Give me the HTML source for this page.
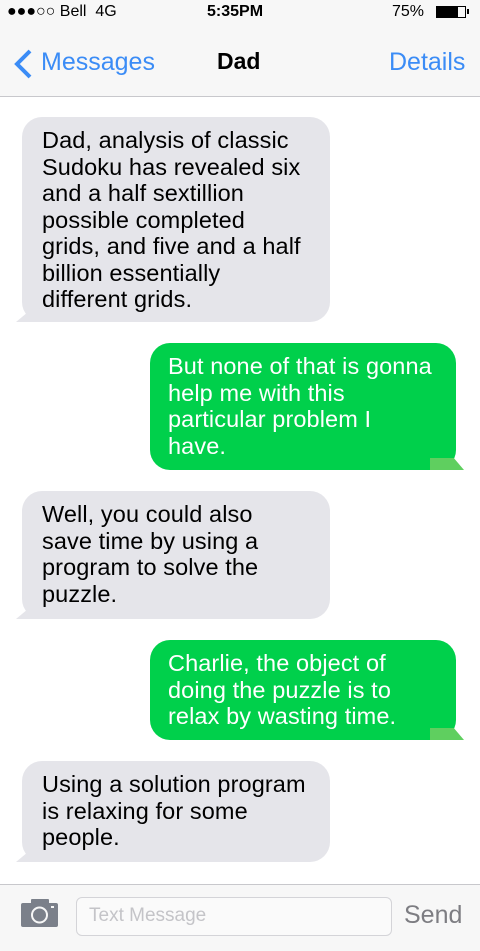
<!DOCTYPE html>
<html><head><style>
body{margin:0;width:480px;height:950px;background:#fff;font-family:"Liberation Sans",Arial,sans-serif;position:relative;overflow:hidden}
.top{position:absolute;left:0;top:0;width:480px;height:96px;background:#f7f7f7;border-bottom:1px solid #c8c8cc}
.abs{position:absolute}
.b{position:absolute;border-radius:20px;font-size:23.5px;line-height:26.5px;padding:10px 10px 9px 20px;box-sizing:border-box;white-space:nowrap;letter-spacing:0.1px}
.g{background:#e5e5ea;color:#000;left:22px;width:308px}
.gr{background:#00d04b;color:#fff;left:150px;width:306px;padding-left:18px}
.tl{position:absolute;left:-6px;bottom:0;width:26px;height:14px;background:#e5e5ea;clip-path:polygon(0 100%,45% 30%,100% 0,100% 100%)}
.tr{position:absolute;right:-8px;bottom:0;width:34px;height:12px;background:#5fcf5f;clip-path:polygon(0 0,70% 0,100% 100%,0 100%)}
</style></head><body>
<div class="top">
<div class="abs" style="left:7px;top:3px;font-size:16px">●●●○○ Bell&nbsp; 4G</div>
<div class="abs" style="left:207px;top:3px;font-size:16px;font-weight:bold">5:35PM</div>
<div class="abs" style="left:392px;top:3px;font-size:16px">75%</div>
<div class="abs" style="left:436px;top:6px;width:30px;height:12px;border:1px solid #000;box-sizing:border-box"><div style="width:21px;height:10px;background:#000"></div></div>
<div class="abs" style="left:467px;top:9px;width:2px;height:5px;background:#000"></div>
<svg class="abs" style="left:12px;top:48px" width="22" height="32"><path d="M18 3 L5 16 L18 29" stroke="#3b8cf6" stroke-width="4" fill="none"/></svg>
<div class="abs" style="left:41px;top:48px;font-size:25px;color:#3b8cf6">Messages</div>
<div class="abs" style="left:217px;top:48px;font-size:23px;font-weight:bold">Dad</div>
<div class="abs" style="left:389px;top:48px;font-size:25px;color:#3b8cf6">Details</div>
</div>

<div class="b g" style="top:117px;height:205px">Dad, analysis of classic<br>Sudoku has revealed six<br>and a half sextillion<br>possible completed<br>grids, and five and a half<br>billion essentially<br>different grids.<div class="tl"></div></div>
<div class="b gr" style="top:343px;height:127px">But none of that is gonna<br>help me with this<br>particular problem I<br>have.<div class="tr"></div></div>
<div class="b g" style="top:491px;height:128px">Well, you could also<br>save time by using a<br>program to solve the<br>puzzle.<div class="tl"></div></div>
<div class="b gr" style="top:640px;height:100px">Charlie, the object of<br>doing the puzzle is to<br>relax by wasting time.<div class="tr"></div></div>
<div class="b g" style="top:761px;height:101px">Using a solution program<br>is relaxing for some<br>people.<div class="tl"></div></div>

<div class="abs" style="left:0;top:884px;width:480px;height:66px;background:#f7f7f7;border-top:1px solid #c8c8cc"></div>
<svg class="abs" style="left:20px;top:899px" width="40" height="30"><rect x="1" y="4" width="37" height="24" rx="2" fill="#7b808a"/><circle cx="19.5" cy="16" r="7.5" fill="none" stroke="#f7f7f7" stroke-width="2"/><rect x="11" y="0" width="18" height="6" rx="1" fill="#7b808a"/><rect x="31" y="7" width="3" height="2" fill="#f7f7f7"/></svg>
<div class="abs" style="left:76px;top:897px;width:316px;height:39px;border:1px solid #d4d4d8;border-radius:6px;box-sizing:border-box;background:#fafafa"></div>
<div class="abs" style="left:89px;top:905px;font-size:19px;color:#c4c4c8">Text Message</div>
<div class="abs" style="left:404px;top:901px;font-size:25px;color:#7d7d82">Send</div>
</body></html>
